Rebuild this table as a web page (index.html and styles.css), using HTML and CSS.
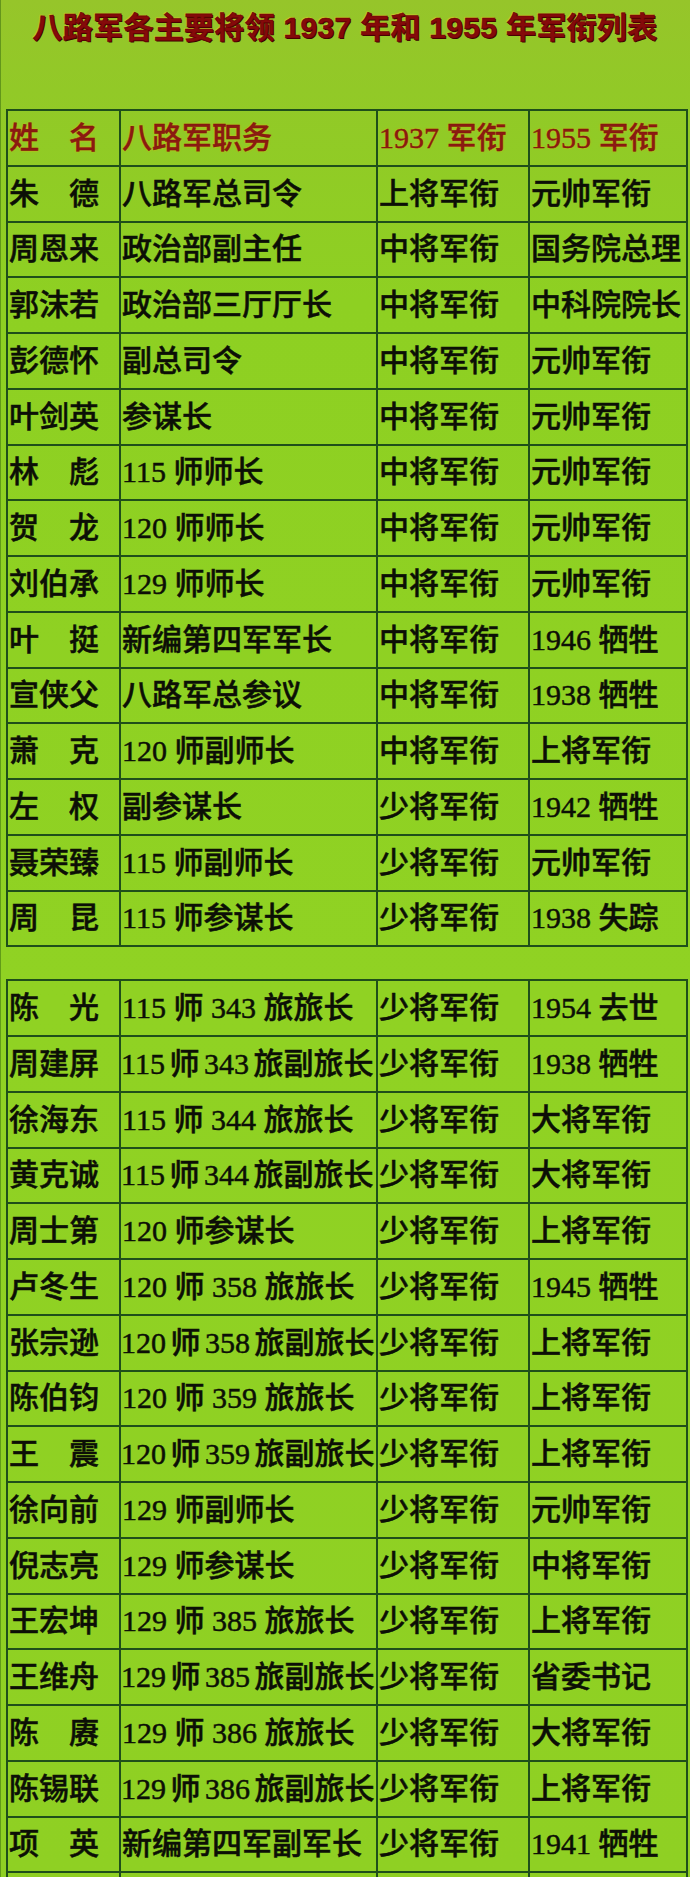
FILE: index.html
```html
<!DOCTYPE html>
<html lang="zh-CN">
<head>
<meta charset="utf-8">
<title>八路军各主要将领 1937 年和 1955 年军衔列表</title>
<link rel="stylesheet" href="styles.css">
</head>
<body>
<div class="page">
  <h1 class="title">八路军各主要将领 1937 年和 1955 年军衔列表</h1>

  <table class="grid">
    <colgroup><col class="c-name"><col class="c-post"><col class="c-r37"><col class="c-r55"></colgroup>
    <tr class="head"><td>姓　名</td><td>八路军职务</td><td>1937 军衔</td><td>1955 军衔</td></tr>
    <tr><td>朱　德</td><td>八路军总司令</td><td>上将军衔</td><td>元帅军衔</td></tr>
    <tr><td>周恩来</td><td>政治部副主任</td><td>中将军衔</td><td>国务院总理</td></tr>
    <tr><td>郭沫若</td><td>政治部三厅厅长</td><td>中将军衔</td><td>中科院院长</td></tr>
    <tr><td>彭德怀</td><td>副总司令</td><td>中将军衔</td><td>元帅军衔</td></tr>
    <tr><td>叶剑英</td><td>参谋长</td><td>中将军衔</td><td>元帅军衔</td></tr>
    <tr><td>林　彪</td><td>115 师师长</td><td>中将军衔</td><td>元帅军衔</td></tr>
    <tr><td>贺　龙</td><td>120 师师长</td><td>中将军衔</td><td>元帅军衔</td></tr>
    <tr><td>刘伯承</td><td>129 师师长</td><td>中将军衔</td><td>元帅军衔</td></tr>
    <tr><td>叶　挺</td><td>新编第四军军长</td><td>中将军衔</td><td>1946 牺牲</td></tr>
    <tr><td>宣侠父</td><td>八路军总参议</td><td>中将军衔</td><td>1938 牺牲</td></tr>
    <tr><td>萧　克</td><td>120 师副师长</td><td>中将军衔</td><td>上将军衔</td></tr>
    <tr><td>左　权</td><td>副参谋长</td><td>少将军衔</td><td>1942 牺牲</td></tr>
    <tr><td>聂荣臻</td><td>115 师副师长</td><td>少将军衔</td><td>元帅军衔</td></tr>
    <tr><td>周　昆</td><td>115 师参谋长</td><td>少将军衔</td><td>1938 失踪</td></tr>
  </table>

  <table class="grid second">
    <colgroup><col class="c-name"><col class="c-post"><col class="c-r37"><col class="c-r55"></colgroup>
    <tr><td>陈　光</td><td>115 师 343 旅旅长</td><td>少将军衔</td><td>1954 去世</td></tr>
    <tr><td>周建屏</td><td class="tight">115 师 343 旅副旅长</td><td>少将军衔</td><td>1938 牺牲</td></tr>
    <tr><td>徐海东</td><td>115 师 344 旅旅长</td><td>少将军衔</td><td>大将军衔</td></tr>
    <tr><td>黄克诚</td><td class="tight">115 师 344 旅副旅长</td><td>少将军衔</td><td>大将军衔</td></tr>
    <tr><td>周士第</td><td>120 师参谋长</td><td>少将军衔</td><td>上将军衔</td></tr>
    <tr><td>卢冬生</td><td>120 师 358 旅旅长</td><td>少将军衔</td><td>1945 牺牲</td></tr>
    <tr><td>张宗逊</td><td class="tight">120 师 358 旅副旅长</td><td>少将军衔</td><td>上将军衔</td></tr>
    <tr><td>陈伯钧</td><td>120 师 359 旅旅长</td><td>少将军衔</td><td>上将军衔</td></tr>
    <tr><td>王　震</td><td class="tight">120 师 359 旅副旅长</td><td>少将军衔</td><td>上将军衔</td></tr>
    <tr><td>徐向前</td><td>129 师副师长</td><td>少将军衔</td><td>元帅军衔</td></tr>
    <tr><td>倪志亮</td><td>129 师参谋长</td><td>少将军衔</td><td>中将军衔</td></tr>
    <tr><td>王宏坤</td><td>129 师 385 旅旅长</td><td>少将军衔</td><td>上将军衔</td></tr>
    <tr><td>王维舟</td><td class="tight">129 师 385 旅副旅长</td><td>少将军衔</td><td>省委书记</td></tr>
    <tr><td>陈　赓</td><td>129 师 386 旅旅长</td><td>少将军衔</td><td>大将军衔</td></tr>
    <tr><td>陈锡联</td><td class="tight">129 师 386 旅副旅长</td><td>少将军衔</td><td>上将军衔</td></tr>
    <tr><td>项　英</td><td>新编第四军副军长</td><td>少将军衔</td><td>1941 牺牲</td></tr>
    <tr><td></td><td></td><td></td><td></td></tr>
  </table>
</div>
</body>
</html>
```

FILE: styles.css
```css
html, body {
  margin: 0;
  padding: 0;
}

body {
  background: #8fce22;
  font-family: "Liberation Serif", "Noto Sans CJK SC", serif;
}

.page {
  width: 690px;
  height: 1877px;
  overflow: hidden;
  background: linear-gradient(180deg, #96c52a 0px, #92c927 90px, #8ed022 300px, #90d223 1000px, #8fd023 1877px);
  box-shadow: inset 1px 0 0 rgba(40, 90, 10, 0.45);
}

.title {
  margin: 0;
  padding-top: 13px;
  height: 96px;
  box-sizing: border-box;
  text-align: center;
  font-family: "Liberation Sans", "Noto Sans CJK SC", sans-serif;
  font-weight: 700;
  font-size: 30px;
  line-height: 30px;
  letter-spacing: 0.3px;
  word-spacing: 0;
  color: #850a0a;
  -webkit-text-stroke: 0.6px #6a0505;
  text-shadow: 1px 1px 0 #3a0000, -1px -1px 1px rgba(240, 200, 40, 0.55);
}

.grid {
  border-collapse: collapse;
  table-layout: fixed;
  width: 680px;
  margin: 13px 0 0 6px;
  font-size: 30px;
  color: #0c0f06;
}

.grid.second {
  margin-top: 32px;
}

.c-name { width: 113px; }
.c-post { width: 257px; }
.c-r37 { width: 152px; }
.c-r55 { width: 158px; }

.grid tr {
  height: 55.75px;
}

.grid td {
  border: 2px solid #1f4f1a;
  padding: 0 0 0 1px;
  line-height: 1;
  vertical-align: middle;
  white-space: nowrap;
  overflow: hidden;
  font-weight: 500;
  -webkit-text-stroke: 0.5px currentColor;
}

.grid td.tight {
  word-spacing: -3px;
  padding-left: 0;
}

.grid .head td {
  color: #8b1a12;
  -webkit-text-stroke: 0.4px #7a140c;
  text-shadow: 0 0 2px rgba(255, 170, 0, 0.9);
}
```
